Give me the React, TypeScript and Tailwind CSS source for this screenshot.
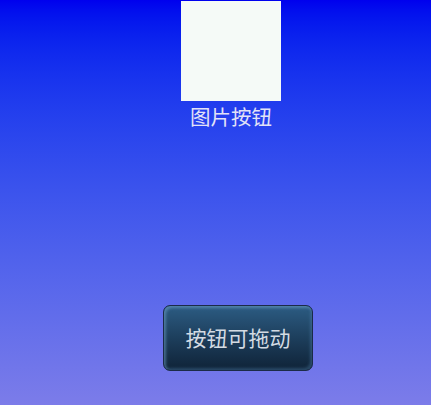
export default function App() {
  return (
    <div className="h-[405px] w-[431px] overflow-hidden bg-gradient-to-b from-[#0000ee] to-[#7c7ce9] font-['Noto_Sans_CJK_SC','Noto_Sans',sans-serif]">
      <div className="ml-[181px] mt-[1px] flex w-[100px] flex-col items-center">
        <button className="h-[100px] w-[100px] bg-[#f5faf7]" />
        <span className="mt-[1px] whitespace-nowrap text-[20.5px] leading-[28px] text-[#e2e2f7]">图片按钮</span>
      </div>
      <div className="ml-[163px] mt-[175px]">
        <button className="flex h-[66px] w-[150px] items-center justify-center rounded-[7px] border border-[#1b2b48] bg-gradient-to-b from-[#2c5c83] to-[#0f2338] text-[21px] text-[#d3dbe3] shadow-[inset_2px_2px_3px_rgba(120,170,210,0.5),inset_-2px_-2px_3px_rgba(80,130,170,0.4)]">
          按钮可拖动
        </button>
      </div>
    </div>
  );
}
